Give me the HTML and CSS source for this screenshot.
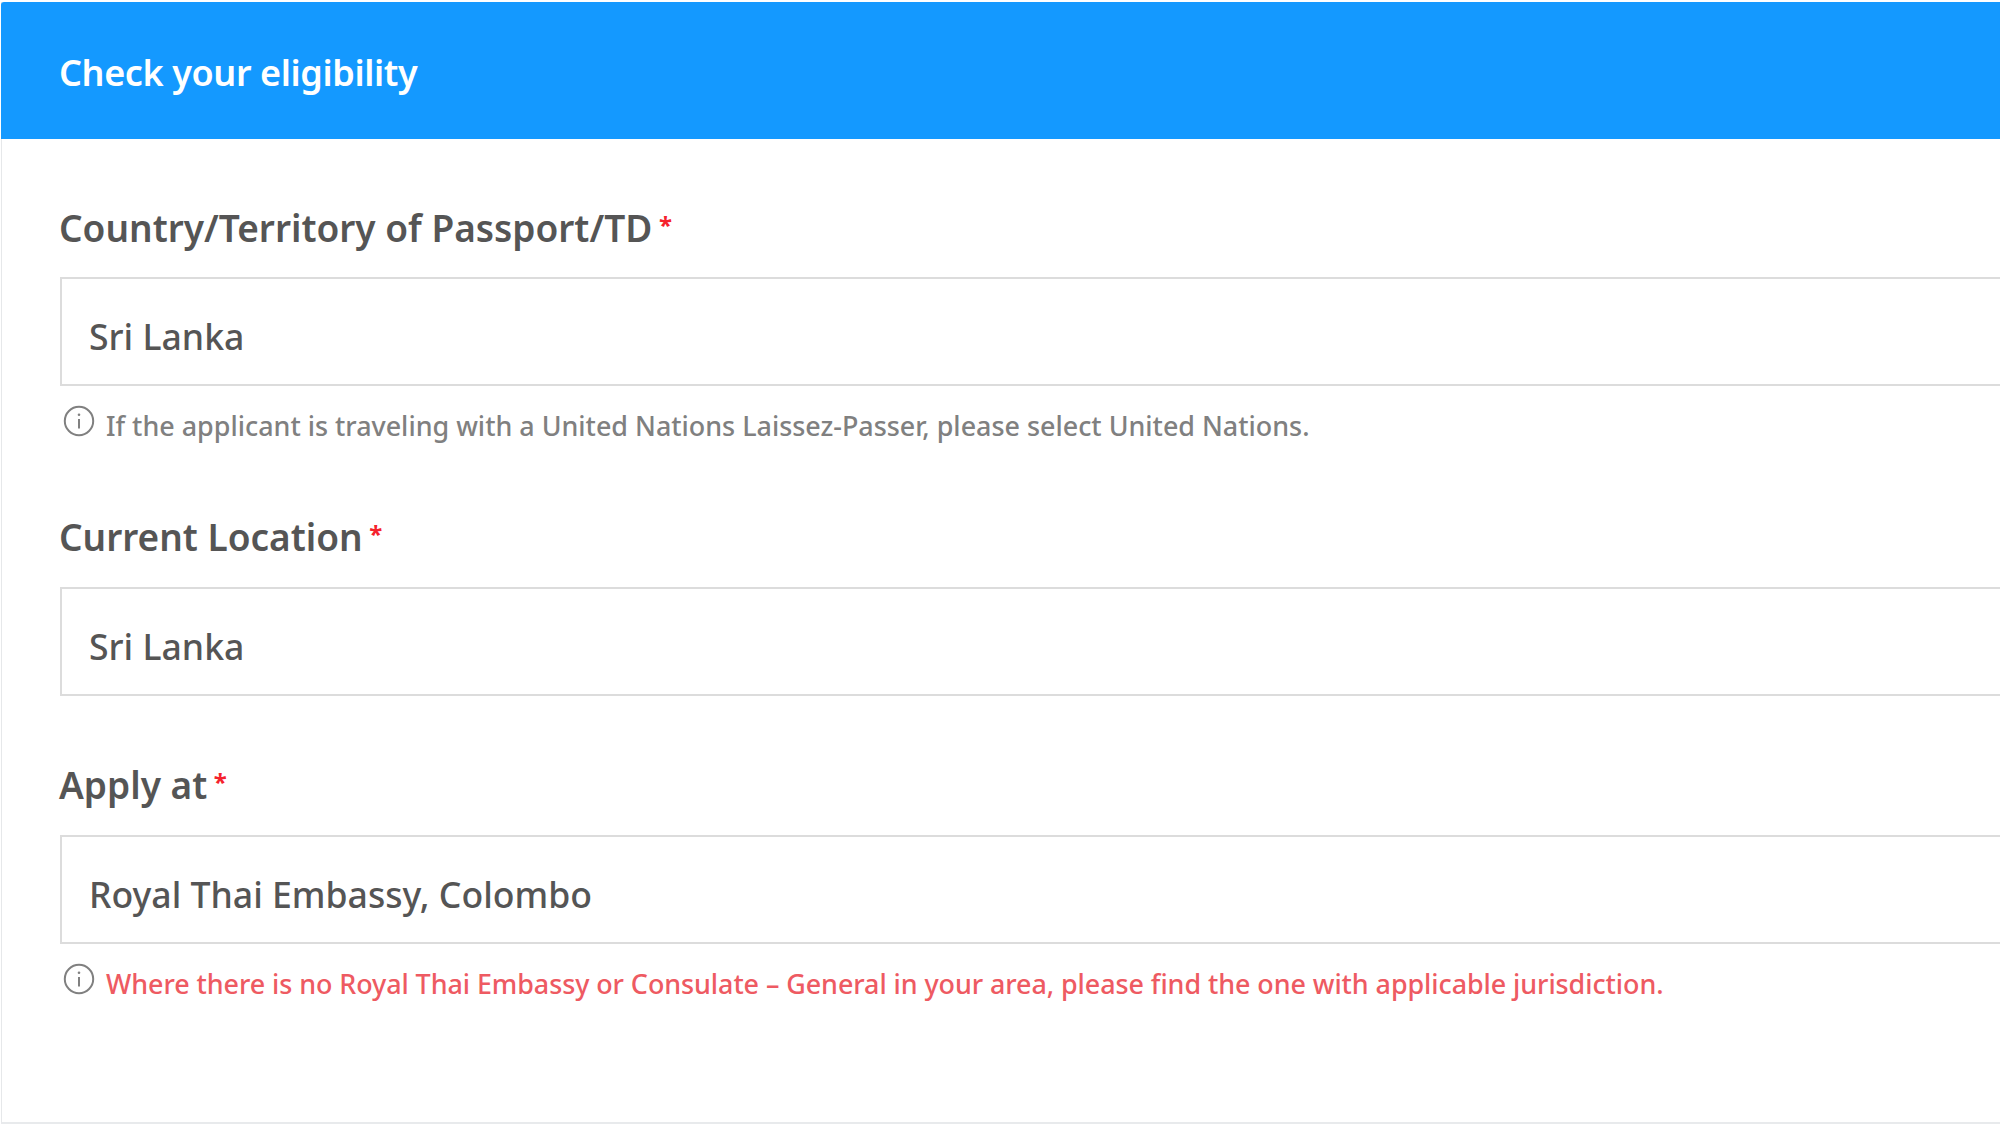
FILE: index.html
```html
<!DOCTYPE html>
<html lang="en">
<head>
<meta charset="utf-8">
<title>Check your eligibility</title>
<link rel="stylesheet" href="styles.css">
</head>
<body>
<section class="card">
  <header class="card-head"><h1>Check your eligibility</h1></header>
  <form class="card-body">
    <div class="field field-first">
      <label class="label">Country/Territory of Passport/TD <span class="req">*</span></label>
      <div class="input">Sri Lanka</div>
      <div class="help">
        <svg class="info" viewBox="0 0 32 32" aria-hidden="true"><circle cx="16" cy="16" r="14.2"/><path d="M16 14v9.5"/><circle class="dot" cx="16" cy="9.8" r="1.3"/></svg>
        <span>If the applicant is traveling with a United Nations Laissez-Passer, please select United Nations.</span>
      </div>
    </div>
    <div class="field field-second">
      <label class="label">Current Location <span class="req">*</span></label>
      <div class="input">Sri Lanka</div>
    </div>
    <div class="field field-third">
      <label class="label">Apply at <span class="req">*</span></label>
      <div class="input">Royal Thai Embassy, Colombo</div>
      <div class="help help-alert">
        <svg class="info" viewBox="0 0 32 32" aria-hidden="true"><circle cx="16" cy="16" r="14.2"/><path d="M16 14v9.5"/><circle class="dot" cx="16" cy="9.8" r="1.3"/></svg>
        <span>Where there is no Royal Thai Embassy or Consulate – General in your area, please find the one with applicable jurisdiction.</span>
      </div>
    </div>
  </form>
</section>
</body>
</html>
```
FILE: styles.css
```css
* { box-sizing: border-box; }
html, body { margin: 0; height: 100%; background: #fff; overflow: hidden; }
body {
  padding: 2px 0 1px 1px;
  font-family: "Noto Sans", "Open Sans", sans-serif;
}
.card {
  height: 1122px;
  width: 2010px;
  background: #fff;
  border-left: 1px solid #e6e8ea;
  border-bottom: 2px solid #e8eaec;
}
.card-head {
  height: 137px;
  background: #1499ff;
  padding-left: 59px;
  display: flex;
  align-items: center;
  border-radius: 3px 0 0 0;
  margin-left: -1px;
}
.card-head h1 {
  margin: 0;
  color: #fff;
  font-size: 36px;
  font-weight: 600;
  letter-spacing: -0.4px;
  line-height: 1;
  position: relative;
  top: 2px;
  left: -1px;
}
.card-body { padding: 0 0 0 58px; }
.field-first { padding-top: 64px; }
.field-second { padding-top: 66px; }
.field-third { padding-top: 64px; }
.label {
  display: block;
  color: #555;
  font-size: 37px;
  font-weight: 600;
  line-height: 50px;
  margin: 0 0 24px -1px;
}
.field-second .label, .field-third .label { margin-bottom: 25px; }
.req { color: #f5222d; font-size: 24px; font-weight: 700; line-height: 0; vertical-align: 8px; margin-left: -3px; }
.input {
  height: 109px;
  border: 2px solid #dcdcdc;
  background: #fff;
  padding: 11px 0 0 27px;
  display: flex;
  align-items: center;
  color: #555;
  font-size: 35.6px;
  font-weight: 500;
  line-height: 1;
}
.help {
  display: flex;
  align-items: flex-start;
  margin-top: 19px;
  padding-left: 3px;
  color: #808080;
  font-size: 26.9px;
  font-weight: 500;
  line-height: 40px;
}
.help span { margin: 1px 0 0 11px; }
.help-alert { color: #ee5a62; letter-spacing: -0.06px; }
.info { width: 32px; height: 32px; flex: none; fill: none; stroke: #808080; stroke-width: 2; }
.info .dot { fill: #808080; stroke: none; }
```
